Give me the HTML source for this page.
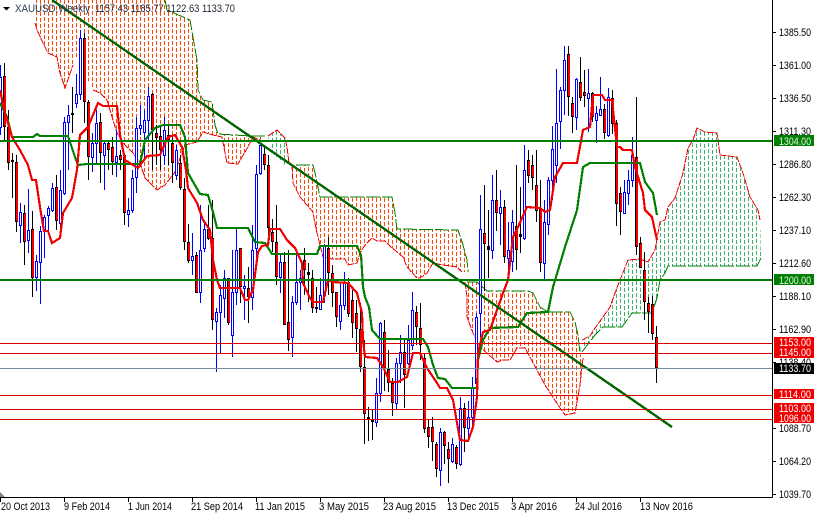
<!DOCTYPE html>
<html><head><meta charset="utf-8"><title>XAUUSD Weekly</title>
<style>
html,body{margin:0;padding:0;background:#fff;width:814px;height:514px;overflow:hidden}
svg{display:block}
text{font-family:"Liberation Sans",sans-serif;font-size:11px;fill:#000}
</style></head><body>
<svg width="814" height="514" viewBox="0 0 814 514" xmlns="http://www.w3.org/2000/svg">
<defs>
<pattern id="o" patternUnits="userSpaceOnUse" width="8" height="6"><rect x="0" y="0" width="1" height="4" fill="#ff4500"/><rect x="4" y="-1" width="1" height="4" fill="#ff4500"/><rect x="4" y="5" width="1" height="1" fill="#ff4500"/></pattern>
<pattern id="g" patternUnits="userSpaceOnUse" width="8" height="6"><rect x="0" y="0" width="1" height="4" fill="#3cb371"/><rect x="4" y="-1" width="1" height="4" fill="#3cb371"/><rect x="4" y="5" width="1" height="1" fill="#3cb371"/></pattern>
<clipPath id="c"><rect x="0" y="0" width="772" height="497"/></clipPath>
</defs>
<rect width="814" height="514" fill="#fff"/>
<g clip-path="url(#c)" shape-rendering="crispEdges">
<!-- clouds -->
<path fill="url(#o)" d="M33 0L35 23L37 30L43 43L48 53L57 57L60 73L65 88L73 65L75 55L93 90L100 93L107 100L113 120L117 133L123 143L133 153L140 163L145 178L157 190L165 185L175 172L185 145L197 142L203 132L213 135L222 137L227 163L238 164L248 147L253 137L260 140L267 136L250 136L218 134L215 125L212 102L203 100L198 90L197 60L190 20L167 10L165 0Z"/>
<path fill="url(#g)" d="M268 136L277 130L285 138L287 147L289 163L283 165L275 155L270 145Z"/>
<path fill="url(#o)" d="M292 165L293 183L300 197L313 212L314 218L317 233L323 257L332 259L345 259L348 265L357 263L360 253L365 245L372 238L377 241L385 241L390 246L403 257L407 267L417 278L420 278L427 273L433 263L443 265L457 267L462 272L468 272L467 260L463 245L458 230L397 229L395 213L392 197L320 197L315 173L313 165Z"/>
<path fill="url(#o)" d="M465 282L467 297L467 317L473 333L480 347L497 362L503 360L510 360L517 348L525 348L537 370L545 385L558 405L565 415L575 413L580 385L583 358L580 353L578 335L575 322L570 312L548 312L540 307L533 293L528 291L487 291L477 282Z"/>
<path fill="url(#g)" d="M580 352L582 340L590 336L595 328L603 317L610 307L615 293L620 280L628 260L640 259L648 262L655 250L658 233L660 222L665 220L668 207L675 198L683 173L688 148L693 140L697 128L705 132L717 133L720 155L737 157L743 173L750 197L758 210L760 220L761 258L757 266L668 266L665 273L660 280L657 298L652 313L632 313L622 327L603 327L595 335L582 352Z"/>
<!-- cloud edges -->
<g fill="none" stroke="#f00000" stroke-width="1" stroke-dasharray="7 1">
<path d="M35 23L37 30L43 43L48 53L57 57L60 73L65 88L73 65"/>
<path d="M93 90L100 93L107 100L113 120L117 133L123 143L133 153L140 163L145 178L157 190L165 185L175 172L185 145L197 142L203 132L213 135L222 137L227 163L238 164L248 147L253 137L260 140"/>
<path d="M268 136L277 130L285 138L287 147L289 163"/>
<path d="M292 165L293 183L300 197L313 212L314 218L317 233L323 257L332 259L345 259L348 265L357 263L360 253L365 245L372 238L377 241L385 241L390 246L403 257L407 267L417 278L420 278L427 273L433 263L443 265L457 267L462 272"/>
<path d="M465 282L467 297L467 317L473 333L480 347L497 362L503 360L510 360L517 348L525 348L537 370L545 385L558 405L565 415L575 413L580 385L583 358"/>
<path d="M582 340L590 336L595 328L603 317L610 307L615 293L620 280L628 260L640 259L648 262L655 250L658 233L660 222L665 220L668 207L675 198L683 173L688 148L693 140L697 128L705 132L717 133L720 155L737 157L743 173L750 197L758 210L760 220"/>
</g>
<g fill="none" stroke="#008000" stroke-width="1" stroke-dasharray="14 2">
<path d="M165 0L167 10L190 20L197 60L198 90L203 100L212 102L215 125L218 134L250 136L267 136"/>
<path d="M296 165L313 165L315 173L320 197L392 197L395 213L397 229L458 230L463 245L467 260L468 272"/>
<path d="M467 282L477 282L487 291L528 291L533 293L540 307L548 312L570 312L575 322L578 335L580 353"/>
<path d="M761 258L757 266L668 266L665 273L660 280L657 298L652 313L632 313L622 327L603 327L595 335L582 352"/>
</g>
<!-- candle wicks -->
<path fill="none" stroke="#0000ff" stroke-width="1" d="M0.5 65V135M20.5 203V243M28.5 189V253M36.5 255V291M40.5 226V304M44.5 215V258M48.5 206V231M52.5 183V212M60.5 170V235M64.5 117V195M68.5 105V170M76.5 74V108M80.5 30V100M92.5 133V172M96.5 110V165M104.5 140V190M116.5 130V177M128.5 198V227M132.5 170V213M136.5 117V193M140.5 105V135M144.5 110V160M148.5 87V140M164.5 117V165M176.5 145V180M192.5 233V275M200.5 205V303M204.5 220V252M216.5 308V372M220.5 285V353M224.5 270V318M232.5 250V357M236.5 228V305M244.5 275V320M252.5 225V310M256.5 165V258M260.5 145V175M280.5 255V293M292.5 296V357M296.5 253V305M300.5 270V310M320.5 278V310M324.5 244V303M340.5 283V330M344.5 272V310M376.5 378V427M380.5 322V402M396.5 358V410M400.5 335V383M408.5 325V365M412.5 292V350M440.5 428V486M452.5 438V463M460.5 397V466M468.5 401V440M472.5 377V425M476.5 313V395M480.5 195V337M492.5 175V259M500.5 190V245M508.5 222V270M512.5 210V272M524.5 145V240M544.5 200V280M548.5 177V235M552.5 126V200M556.5 69V183M560.5 87V149M564.5 46V115M576.5 78V130M588.5 69V132M596.5 106V143M600.5 77V116M608.5 88V137M624.5 180V214M628.5 170V205M632.5 137V187"/>
<path fill="none" stroke="#000" stroke-width="1" d="M4.5 63V140M8.5 110V170M12.5 153V198M16.5 155V232M24.5 205V265M32.5 211V297M56.5 175V230M72.5 87V133M84.5 33V123M88.5 100V180M100.5 113V183M108.5 140V170M112.5 137V175M120.5 150V170M124.5 155V225M152.5 93V170M156.5 125V165M160.5 125V170M168.5 125V165M172.5 135V183M180.5 155V190M184.5 178V250M188.5 224V263M196.5 252V293M208.5 205V240M212.5 200V330M228.5 278V325M240.5 248V303M248.5 267V323M264.5 147V170M268.5 155V238M272.5 219V252M276.5 205V285M284.5 252V325M288.5 250V351M304.5 248V295M308.5 263V302M312.5 270V313M316.5 287V313M328.5 237V295M332.5 265V307M336.5 292V327M348.5 278V317M352.5 290V338M356.5 300V352M360.5 303V372M364.5 340V444M368.5 407V441M372.5 410V440M384.5 320V391M388.5 350V392M392.5 378V416M404.5 340V408M416.5 306V345M420.5 303V360M424.5 353V433M428.5 420V448M432.5 417V461M436.5 442V477M444.5 431V464M448.5 442V483M456.5 445V469M464.5 403V452M484.5 185V291M488.5 210V278M496.5 170V231M504.5 200V263M516.5 165V270M520.5 187V253M528.5 150V183M532.5 155V190M536.5 150V222M540.5 180V272M568.5 46V116M572.5 97V133M580.5 57V101M584.5 70V107M592.5 92V122M604.5 104V139M612.5 90V134M616.5 120V226M620.5 187V235M636.5 97V255M640.5 237V268M644.5 252V320M648.5 297V333M652.5 296V340M656.5 326V383"/>
<!-- bull bodies -->
<path fill="#fff" stroke="#0000ff" stroke-width="1" d="M-0.5 77.5h2V127.5h-2zM19.5 212.5h2V225.5h-2zM27.5 230.5h2V240.5h-2zM35.5 261.5h2V277.5h-2zM39.5 231.5h2V262.5h-2zM43.5 217.5h2V231.5h-2zM47.5 208.5h2V215.5h-2zM51.5 188.5h2V210.5h-2zM59.5 190.5h2V223.5h-2zM63.5 122.5h2V193.5h-2zM67.5 115.5h2V122.5h-2zM75.5 94.5h2V103.5h-2zM79.5 38.5h2V94.5h-2zM91.5 143.5h2V157.5h-2zM95.5 123.5h2V143.5h-2zM103.5 143.5h2V155.5h-2zM115.5 156.5h2V162.5h-2zM127.5 210.5h2V214.5h-2zM131.5 178.5h2V210.5h-2zM135.5 128.5h2V177.5h-2zM139.5 125.5h2V128.5h-2zM143.5 120.5h2V132.5h-2zM147.5 96.5h2V120.5h-2zM163.5 130.5h2V155.5h-2zM175.5 150.5h2V175.5h-2zM191.5 256.5h2V260.5h-2zM199.5 250.5h2V292.5h-2zM203.5 229.5h2V248.5h-2zM215.5 312.5h2V321.5h-2zM219.5 295.5h2V312.5h-2zM223.5 278.5h2V298.5h-2zM231.5 292.5h2V335.5h-2zM235.5 250.5h2V292.5h-2zM243.5 286.5h2V288.5h-2zM251.5 250.5h2V297.5h-2zM255.5 174.5h2V248.5h-2zM259.5 145.5h2V173.5h-2zM279.5 262.5h2V277.5h-2zM291.5 302.5h2V337.5h-2zM295.5 282.5h2V302.5h-2zM299.5 278.5h2V282.5h-2zM319.5 295.5h2V309.5h-2zM323.5 245.5h2V295.5h-2zM339.5 305.5h2V321.5h-2zM343.5 282.5h2V305.5h-2zM375.5 393.5h2V422.5h-2zM379.5 323.5h2V393.5h-2zM395.5 363.5h2V403.5h-2zM399.5 352.5h2V363.5h-2zM407.5 340.5h2V363.5h-2zM411.5 310.5h2V345.5h-2zM439.5 432.5h2V470.5h-2zM451.5 444.5h2V461.5h-2zM459.5 408.5h2V464.5h-2zM467.5 417.5h2V428.5h-2zM471.5 388.5h2V417.5h-2zM475.5 317.5h2V383.5h-2zM479.5 229.5h2V313.5h-2zM491.5 200.5h2V250.5h-2zM499.5 207.5h2V213.5h-2zM507.5 250.5h2V258.5h-2zM511.5 222.5h2V261.5h-2zM523.5 170.5h2V238.5h-2zM543.5 222.5h2V263.5h-2zM547.5 180.5h2V224.5h-2zM551.5 149.5h2V180.5h-2zM555.5 123.5h2V165.5h-2zM559.5 90.5h2V121.5h-2zM563.5 60.5h2V90.5h-2zM575.5 79.5h2V117.5h-2zM587.5 93.5h2V98.5h-2zM595.5 113.5h2V120.5h-2zM599.5 109.5h2V115.5h-2zM607.5 97.5h2V135.5h-2zM623.5 192.5h2V213.5h-2zM627.5 180.5h2V193.5h-2zM631.5 155.5h2V180.5h-2z"/>
<!-- bear bodies -->
<path id="b" fill="none" stroke="#000" stroke-width="3" d="M4.5 76V127M8.5 127V163M12.5 160V162M16.5 162V222M24.5 213V242M32.5 229V278M56.5 187V221M72.5 113V115M84.5 38V102M88.5 102V157M100.5 122V153M108.5 143V150M112.5 147V162M120.5 155V160M124.5 155V213M152.5 94V130M156.5 133V138M160.5 136V150M168.5 135V140M172.5 143V163M180.5 163V188M184.5 189V242M188.5 242V261M196.5 255V293M208.5 229V239M212.5 238V320M228.5 278V323M240.5 248V287M248.5 288V297M264.5 154V165M268.5 165V228M272.5 232V242M276.5 242V277M284.5 262V325M288.5 322V340M304.5 260V270M308.5 272V275M312.5 278V308M316.5 307V309M328.5 248V273M332.5 273V293M336.5 292V317M348.5 282V314M352.5 300V323M356.5 313V329M360.5 329V367M364.5 367V414M368.5 417V420M372.5 419V422M384.5 332V368M388.5 369V383M392.5 383V403M404.5 352V375M416.5 312V327M420.5 328V345M424.5 358V429M428.5 427V437M432.5 427V442M436.5 444V469M444.5 432V446M448.5 449V459M456.5 447V464M464.5 408V428M484.5 233V244M488.5 246V250M496.5 200V213M504.5 207V257M516.5 226V250M520.5 234V237M528.5 160V176M532.5 165V178M536.5 185V211M540.5 209V263M568.5 54V97M572.5 103V117M580.5 82V98M584.5 92V96M592.5 93V117M604.5 109V133M612.5 98V124M616.5 123V204M620.5 193V212M636.5 157V247M640.5 243V268M644.5 270V302M648.5 303V312M652.5 304V334M656.5 337V368"/>
<path fill="none" stroke="#f00000" stroke-width="2" transform="translate(0.5 0)" d="M4.5 77V126M8.5 128V162M16.5 163V221M24.5 214V241M32.5 230V277M56.5 188V220M84.5 39V101M88.5 103V156M100.5 123V152M108.5 144V149M112.5 148V161M120.5 156V159M124.5 156V212M152.5 95V129M156.5 134V137M160.5 137V149M168.5 136V139M172.5 144V162M180.5 164V187M184.5 190V241M188.5 243V260M196.5 256V292M208.5 230V238M212.5 239V319M228.5 279V322M240.5 249V286M248.5 289V296M264.5 155V164M268.5 166V227M272.5 233V241M276.5 243V276M284.5 263V324M288.5 323V339M304.5 261V269M312.5 279V307M328.5 249V272M332.5 274V292M336.5 293V316M348.5 283V313M352.5 301V322M356.5 314V328M360.5 330V366M364.5 368V413M384.5 333V367M388.5 370V382M392.5 384V402M404.5 353V374M416.5 313V326M420.5 329V344M424.5 359V428M428.5 428V436M432.5 428V441M436.5 445V468M444.5 433V445M448.5 450V458M456.5 448V463M464.5 409V427M484.5 234V243M496.5 201V212M504.5 208V256M516.5 227V249M528.5 161V175M532.5 166V177M536.5 186V210M540.5 210V262M568.5 55V96M572.5 104V116M580.5 83V97M584.5 93V95M592.5 94V116M604.5 110V132M612.5 99V123M616.5 124V203M620.5 194V211M636.5 158V246M640.5 244V267M644.5 271V301M648.5 304V311M652.5 305V333M656.5 338V367"/>
<!-- indicator lines -->
<path fill="none" stroke="#008000" stroke-width="2.2" d="M0 103L7 117L12 137L33 137L37 134L40 136L68 136L75 157L78 165L87 164L140 164L145 140L155 128L163 125L180 125L185 137L188 173L200 194L208 195L213 212L217 228L248 228L255 242L265 243L272 254L317 254L320 246L357 246L361 255L363 287L365 297L369 307L372 330L380 339L423 339L428 347L433 365L438 378L445 379L452 388L477 388L478 360L483 340L490 328L518 327L527 313L548 312L553 287L565 247L577 210L583 167L590 163L640 163L645 182L653 193L657 215"/>
<path fill="none" stroke="#f00000" stroke-width="2.2" d="M0 90L5 113L12 137L20 150L28 165L32 180L36 180L40 207L44 231L48 231L52 243L60 238L63 213L72 198L77 170L80 135L88 127L98 103L103 106L117 106L120 135L125 160L138 168L147 156L160 155L168 137L175 135L182 147L186 170L188 188L197 203L203 220L210 230L213 260L217 280L220 288L240 288L245 300L248 300L253 290L258 252L262 246L268 245L270 229L280 229L287 240L295 248L302 263L303 283L310 298L313 302L323 302L328 280L333 282L348 283L357 293L362 313L363 340L365 357L377 358L383 367L390 382L398 382L407 377L413 353L420 353L427 368L437 383L440 388L447 388L453 400L460 440L468 441L473 427L477 397L478 353L483 332L490 330L503 293L508 280L513 237L518 227L527 207L540 208L545 212L550 210L555 177L563 163L577 163L583 130L590 127L593 95L602 95L605 100L612 100L617 147L620 147L623 150L632 150L635 167L643 193L645 210L652 217L657 240"/>
<path fill="none" stroke="#006400" stroke-width="2.4" d="M52 0L672 427"/>
<rect x="0" y="140" width="772" height="2" fill="#008000"/>
<rect x="0" y="279" width="772" height="2" fill="#008000"/>
<path fill="none" stroke="#dc0000" stroke-width="1" d="M0 343.500H772M0 353.500H772M0 395.500H772M0 409.500H772M0 419.500H772"/>
<path fill="none" stroke="#778899" stroke-width="1" d="M0 368.500H772"/>
</g>
<!-- scroll marker -->
<path d="M0 492L5 497H0Z" fill="#778899"/>
<!-- axes -->
<path fill="none" stroke="#000" stroke-width="1" shape-rendering="crispEdges" d="M772.500 0V497.500M0 497.500H772.500M772 32.500h4M772 65.500h4M772 98.500h4M772 131.500h4M772 164.500h4M772 197.500h4M772 230.500h4M772 263.500h4M772 296.500h4M772 329.500h4M772 362.500h4M772 428.500h4M772 461.500h4M772 494.500h4M0.500 497V502M64.500 497V502M128.500 497V502M192.500 497V502M256.500 497V502M320.500 497V502M384.500 497V502M448.500 497V502M512.500 497V502M576.500 497V502M640.500 497V502"/>
<!-- header -->
<path d="M3 7H10L6.500 10.500Z" fill="#000"/>
<text x="15" y="12" textLength="75" lengthAdjust="spacingAndGlyphs" style="fill:#2b3a55">XAUUSD,Weekly</text>
<text x="95" y="12" textLength="140" lengthAdjust="spacingAndGlyphs" style="fill:#1d2433">1157.43 1185.77 1122.63 1133.70</text>
<!-- price axis labels -->
<g>
<text x="779" y="36" textLength="32" lengthAdjust="spacingAndGlyphs">1385.50</text>
<text x="779" y="69" textLength="32" lengthAdjust="spacingAndGlyphs">1361.00</text>
<text x="779" y="102" textLength="32" lengthAdjust="spacingAndGlyphs">1336.50</text>
<text x="779" y="135" textLength="32" lengthAdjust="spacingAndGlyphs">1311.30</text>
<text x="779" y="168" textLength="32" lengthAdjust="spacingAndGlyphs">1286.80</text>
<text x="779" y="201" textLength="32" lengthAdjust="spacingAndGlyphs">1262.30</text>
<text x="779" y="234" textLength="32" lengthAdjust="spacingAndGlyphs">1237.10</text>
<text x="779" y="267" textLength="32" lengthAdjust="spacingAndGlyphs">1212.60</text>
<text x="779" y="300" textLength="32" lengthAdjust="spacingAndGlyphs">1188.10</text>
<text x="779" y="333" textLength="32" lengthAdjust="spacingAndGlyphs">1162.90</text>
<text x="779" y="366" textLength="32" lengthAdjust="spacingAndGlyphs">1138.40</text>
<text x="779" y="432" textLength="32" lengthAdjust="spacingAndGlyphs">1088.70</text>
<text x="779" y="465" textLength="32" lengthAdjust="spacingAndGlyphs">1064.20</text>
<text x="779" y="498" textLength="32" lengthAdjust="spacingAndGlyphs">1039.70</text>
</g>
<!-- level boxes -->
<rect x="774" y="135" width="40" height="11" fill="#008000"/>
<text x="779" y="145" textLength="32" lengthAdjust="spacingAndGlyphs" style="fill:#e8f0e8">1304.00</text>
<rect x="774" y="274" width="40" height="11" fill="#008000"/>
<text x="779" y="284" textLength="32" lengthAdjust="spacingAndGlyphs" style="fill:#e8f0e8">1200.00</text>
<rect x="774" y="337" width="40" height="21" fill="#f00000"/>
<text x="779" y="346" textLength="32" lengthAdjust="spacingAndGlyphs" style="fill:#fff">1153.00</text>
<text x="779" y="356" textLength="32" lengthAdjust="spacingAndGlyphs" style="fill:#fff">1145.00</text>
<rect x="774" y="363" width="40" height="11" fill="#000"/>
<text x="779" y="372" textLength="32" lengthAdjust="spacingAndGlyphs" style="fill:#fff">1133.70</text>
<rect x="774" y="389" width="40" height="10" fill="#f00000"/>
<text x="779" y="398" textLength="32" lengthAdjust="spacingAndGlyphs" style="fill:#fff">1114.00</text>
<rect x="774" y="403" width="40" height="20" fill="#f00000"/>
<text x="779" y="412" textLength="32" lengthAdjust="spacingAndGlyphs" style="fill:#fff">1103.00</text>
<text x="779" y="422" textLength="32" lengthAdjust="spacingAndGlyphs" style="fill:#fff">1096.00</text>
<!-- time axis labels -->
<text x="1" y="510" textLength="49" lengthAdjust="spacingAndGlyphs">20 Oct 2013</text>
<text x="64" y="510" textLength="46" lengthAdjust="spacingAndGlyphs">9 Feb 2014</text>
<text x="128" y="510" textLength="44" lengthAdjust="spacingAndGlyphs">1 Jun 2014</text>
<text x="191" y="510" textLength="52" lengthAdjust="spacingAndGlyphs">21 Sep 2014</text>
<text x="255" y="510" textLength="50" lengthAdjust="spacingAndGlyphs">11 Jan 2015</text>
<text x="319" y="510" textLength="50" lengthAdjust="spacingAndGlyphs">3 May 2015</text>
<text x="383" y="510" textLength="53" lengthAdjust="spacingAndGlyphs">23 Aug 2015</text>
<text x="447" y="510" textLength="52" lengthAdjust="spacingAndGlyphs">13 Dec 2015</text>
<text x="511" y="510" textLength="46" lengthAdjust="spacingAndGlyphs">3 Apr 2016</text>
<text x="575" y="510" textLength="47" lengthAdjust="spacingAndGlyphs">24 Jul 2016</text>
<text x="640" y="510" textLength="53" lengthAdjust="spacingAndGlyphs">13 Nov 2016</text>
</svg>
</body></html>
